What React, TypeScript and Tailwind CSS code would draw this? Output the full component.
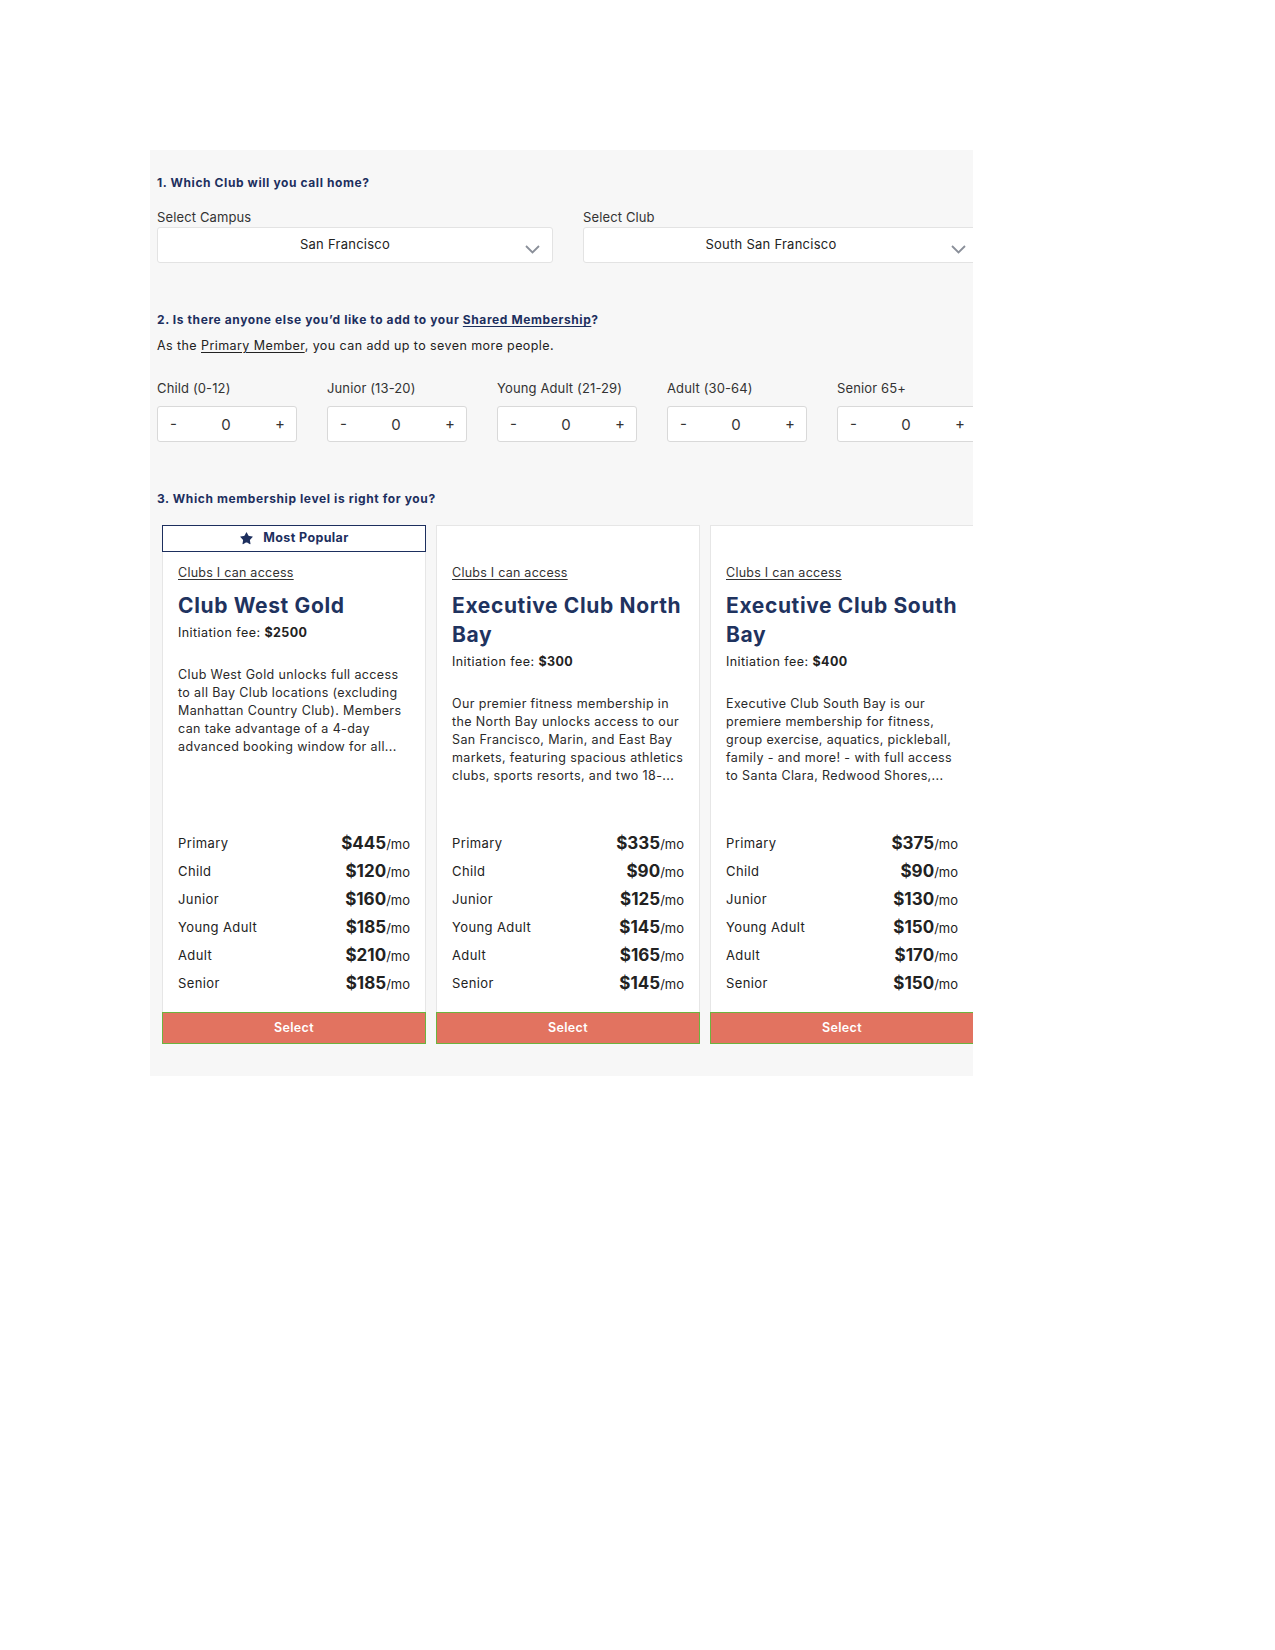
import { Star } from "lucide-react";

const counters = ["Child (0-12)", "Junior (13-20)", "Young Adult (21-29)", "Adult (30-64)", "Senior 65+"];

type Plan = {
	name: string[];
	fee: string;
	popular?: boolean;
	desc: string[];
	prices: [string, string][];
};

const plans: Plan[] = [
	{
		name: ["Club West Gold"],
		fee: "$2500",
		popular: true,
		desc: [
			"Club West Gold unlocks full access",
			"to all Bay Club locations (excluding",
			"Manhattan Country Club). Members",
			"can take advantage of a 4-day",
			"advanced booking window for all...",
		],
		prices: [
			["Primary", "$445"],
			["Child", "$120"],
			["Junior", "$160"],
			["Young Adult", "$185"],
			["Adult", "$210"],
			["Senior", "$185"],
		],
	},
	{
		name: ["Executive Club North", "Bay"],
		fee: "$300",
		desc: [
			"Our premier fitness membership in",
			"the North Bay unlocks access to our",
			"San Francisco, Marin, and East Bay",
			"markets, featuring spacious athletics",
			"clubs, sports resorts, and two 18-...",
		],
		prices: [
			["Primary", "$335"],
			["Child", "$90"],
			["Junior", "$125"],
			["Young Adult", "$145"],
			["Adult", "$165"],
			["Senior", "$145"],
		],
	},
	{
		name: ["Executive Club South", "Bay"],
		fee: "$400",
		desc: [
			"Executive Club South Bay is our",
			"premiere membership for fitness,",
			"group exercise, aquatics, pickleball,",
			"family - and more! - with full access",
			"to Santa Clara, Redwood Shores,...",
		],
		prices: [
			["Primary", "$375"],
			["Child", "$90"],
			["Junior", "$130"],
			["Young Adult", "$150"],
			["Adult", "$170"],
			["Senior", "$150"],
		],
	},
];

const Chevron = () => (
	<svg width="15" height="9" viewBox="0 0 15 9" fill="none" className="absolute right-[12px] top-[17px]">
		<path d="M1 1l6.5 6.5L14 1" stroke="#8a8f99" strokeWidth="1.8" />
	</svg>
);

const Dropdown = ({ label, value }: { label: string; value: string }) => (
	<div className="w-[396px] shrink-0">
		<div className="text-[13px] leading-[16px] tracking-[0.01em] text-[#333] mb-[2px]">{label}</div>
		<div className="relative h-[36px] bg-white border border-[#e3e3e3] rounded-[3px] flex items-center justify-center pr-[20px] text-[13px] tracking-[0.02em] text-[#222]">
			{value}
			<Chevron />
		</div>
	</div>
);

const Counter = ({ label }: { label: string }) => (
	<div className="w-[140px] shrink-0">
		<div className="text-[13px] leading-[16px] tracking-[0.01em] text-[#333] mb-[10px]">{label}</div>
		<div className="h-[36px] bg-white border border-[#d9d9d9] rounded-[3px] flex items-center justify-between pl-[12px] pr-[11px] text-[15px] text-[#333]">
			<span>-</span>
			<span className="pt-[2px]">0</span>
			<span>+</span>
		</div>
	</div>
);

const PlanCard = ({ plan }: { plan: Plan }) => (
	<div className="w-[264px] shrink-0 h-[519px] bg-white border border-[#e6e6e6] flex flex-col">
		{plan.popular ? (
			<div className="h-[27px] -mx-px -mt-px border-[1.5px] border-[#1d2f5e] flex items-center justify-center gap-[9px] text-[12.5px] tracking-[0.03em] font-bold text-[#1d2f5e]">
				<Star size={15} fill="#1d2f5e" strokeWidth={0} />
				Most Popular
			</div>
		) : (
			<div className="h-[26px]" />
		)}
		<div className="px-[15px] pt-[13px] flex-1 flex flex-col">
			<div className="text-[12.5px] leading-[16px] tracking-[0.02em] text-[#333] underline underline-offset-2">
				Clubs I can access
			</div>
			<div className="mt-[10px] text-[21px] leading-[29px] tracking-[0.03em] font-bold text-[#1f335f]">
				{plan.name.map((l) => (
					<div key={l} className="whitespace-nowrap">
						{l}
					</div>
				))}
			</div>
			<div className="mt-[5px] text-[12.5px] leading-[16px] tracking-[0.035em] text-[#222]">
				Initiation fee: <span className="font-bold">{plan.fee}</span>
			</div>
			<div className="mt-[25px] text-[12.5px] leading-[18px] tracking-[0.03em] text-[#2a2a2a]">
				{plan.desc.map((l) => (
					<div key={l} className="whitespace-nowrap">
						{l}
					</div>
				))}
			</div>
			<div className="mt-auto mb-[14px]">
				{plan.prices.map(([k, v]) => (
					<div key={k} className="h-[28px] flex items-center justify-between">
						<span className="text-[13px] tracking-[0.03em] text-[#222]">{k}</span>
						<span className="text-[#222]">
							<span className="text-[17px] font-bold">{v}</span>
							<span className="text-[13px]">/mo</span>
						</span>
					</div>
				))}
			</div>
		</div>
		<button className="h-[32px] -mx-px -mb-px bg-[#e27360] border-[1.5px] border-[#6db33f] text-white text-[12.5px] tracking-[0.03em] font-semibold">
			Select
		</button>
	</div>
);

export default function App() {
	return (
		<div className="min-h-[1650px] bg-white pt-[150px] pl-[150px] font-['Inter',sans-serif]">
			<div className="w-[823px] h-[926px] bg-[#f7f7f7] overflow-hidden pl-[7px] pt-[25px]">
				<div className="w-[900px]">
					<h2 className="text-[12px] leading-[16px] tracking-[0.05em] font-bold text-[#1d2f5e]">
						1. Which Club will you call home?
					</h2>
					<div className="mt-[18px] flex gap-[30px]">
						<Dropdown label="Select Campus" value="San Francisco" />
						<Dropdown label="Select Club" value="South San Francisco" />
					</div>

					<h2 className="mt-[49px] text-[12px] leading-[16px] tracking-[0.05em] font-bold text-[#1d2f5e]">
						2. Is there anyone else you’d like to add to your{" "}
						<span className="underline underline-offset-2">Shared Membership</span>?
					</h2>
					<p className="mt-[10px] text-[12.5px] leading-[16px] tracking-[0.034em] text-[#222]">
						As the <span className="underline underline-offset-2">Primary Member</span>, you can add up to seven more people.
					</p>
					<div className="mt-[26px] flex gap-[30px]">
						{counters.map((c) => (
							<Counter key={c} label={c} />
						))}
					</div>

					<h2 className="mt-[49px] text-[12px] leading-[16px] tracking-[0.05em] font-bold text-[#1d2f5e]">
						3. Which membership level is right for you?
					</h2>
					<div className="mt-[18px] ml-[5px] flex gap-[10px]">
						{plans.map((p) => (
							<PlanCard key={p.name.join(" ")} plan={p} />
						))}
					</div>
				</div>
			</div>
		</div>
	);
}
